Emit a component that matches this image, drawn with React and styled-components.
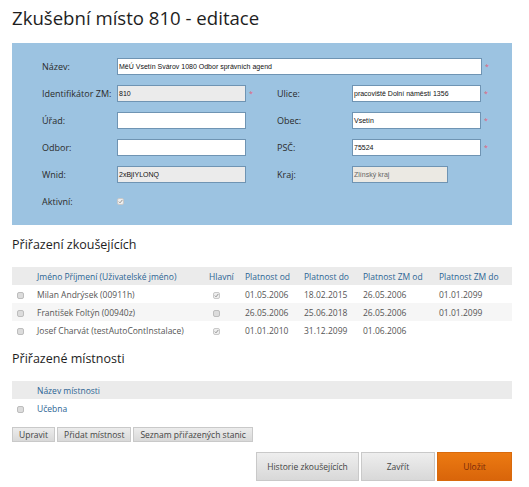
import React from 'react';
import styled, { createGlobalStyle } from 'styled-components';

const GlobalStyle = createGlobalStyle`
  body {
    margin: 0;
    background: #fff;
    font-family: "Open Sans", "DejaVu Sans", sans-serif;
    color: #333;
  }
`

const Page = styled.div`
  width: 500px;
  margin-left: 12px;
`

const Title = styled.h1`
  margin: 0;
  padding-top: 4px;
  font-size: 18.6px;
  line-height: 28px;
  font-weight: 400;
  color: #1e1e1e;
`

const Panel = styled.div`
  margin-top: 11px;
  background: #9cc3e1;
  padding: 15px 0 15px 30px;
`

const FormGrid = styled.div`
  display: grid;
  grid-template-columns: 75px 160px 75px 139px;
  row-gap: 10px;
  align-items: center;
`

const Label = styled.div`
  font-size: 9px;
  color: #2b2b2b;
  line-height: 17px;
`

const Cell = styled.div`
  display: flex;
  align-items: center;
  grid-column: ${({ span }) => span || 'auto'};
`

const Input = styled.div`
  box-sizing: border-box;
  width: ${({ w }) => w || 129}px;
  height: 17px;
  border: 1px solid #6f94b3;
  background: ${({ bg }) => bg || '#fff'};
  font-family: "Liberation Sans", Arial, sans-serif;
  font-size: 7px;
  line-height: 15px;
  padding-left: 1px;
  color: ${({ muted }) => (muted ? '#666' : '#111')};
  white-space: nowrap;
  overflow: hidden;
`

const Star = styled.span`
  margin-left: 3px;
  color: #e0607a;
  font-size: 7px;
  line-height: 7px;
`

const Box = styled.span`
  display: inline-block;
  box-sizing: border-box;
  width: 7px;
  height: 7px;
  border-radius: 2px;
  border: 1px solid ${({ checked }) => (checked ? '#c8c8c8' : '#bdbdbd')};
  background: ${({ checked }) => (checked ? '#eee' : '#dcdcdc')};
  position: relative;
  vertical-align: middle;
  svg {
    position: absolute;
    left: 0;
    top: 0;
  }
`

const Check = ({ checked }) => (
  <Box checked={checked}>
    {checked && (
      <svg width="5" height="5" viewBox="0 0 5 5">
        <path d="M0.8 2.6 L2 3.8 L4.3 1" fill="none" stroke="#888" strokeWidth="0.9" />
      </svg>
    )}
  </Box>
)

const Heading = styled.h2`
  margin: 11px 0 13px;
  font-size: 12.5px;
  line-height: 18px;
  font-weight: 400;
  color: #1e1e1e;
`

const Table = styled.table`
  width: 500px;
  border-collapse: collapse;
  table-layout: fixed;
  font-size: 8.5px;
`

const Th = styled.th`
  height: 18px;
  padding: 0;
  background: #ebebeb;
  color: #2c6594;
  font-weight: 400;
  text-align: left;
`

const Tr = styled.tr`
  background: ${({ alt }) => (alt ? '#f6f6f6' : '#fff')};
`

const Td = styled.td`
  height: 18px;
  padding: 0;
  color: ${({ link }) => (link ? '#2c6594' : '#555')};
  text-align: left;
  padding-left: ${({ pl }) => pl || 0}px;
`

const SmallButtons = styled.div`
  display: flex;
  gap: 2px;
  margin-top: 10px;
`

const SmallButton = styled.button`
  height: 15px;
  padding: 0 6px;
  border: 1px solid #c9c9c9;
  background: linear-gradient(#ececec, #d9d9d9);
  font-family: inherit;
  font-size: 8.5px;
  color: #444;
  line-height: 13px;
`

const Footer = styled.div`
  display: flex;
  justify-content: flex-end;
  gap: 2px;
  margin-top: 10px;
`

const BigButton = styled.button`
  width: ${({ w }) => w}px;
  height: 29px;
  border: 1px solid ${({ primary }) => (primary ? '#d96a0c' : '#c9c9c9')};
  background: ${({ primary }) =>
    primary ? 'linear-gradient(#ec7a12, #d9650a)' : 'linear-gradient(#eeeeee, #d8d8d8)'};
  color: ${({ primary }) => (primary ? '#7a2a0a' : '#444')};
  font-family: inherit;
  font-size: 8.5px;
`

const examiners = [
  { name: 'Milan Andrýsek (00911h)', main: true, od: '01.05.2006', do: '18.02.2015', zmOd: '26.05.2006', zmDo: '01.01.2099' },
  { name: 'František Foltýn (00940z)', main: false, od: '26.05.2006', do: '25.06.2018', zmOd: '26.05.2006', zmDo: '01.01.2099' },
  { name: 'Josef Charvát (testAutoContInstalace)', main: true, od: '01.01.2010', do: '31.12.2099', zmOd: '01.06.2006', zmDo: '' },
]

const App = () => (
  <Page>
    <GlobalStyle />
    <Title>Zkušební místo 810 - editace</Title>

    <Panel>
      <FormGrid>
        <Label>Název:</Label>
        <Cell span="2 / 5">
          <Input w={365}>MěÚ Vsetín Svárov 1080 Odbor správních agend</Input>
          <Star>*</Star>
        </Cell>

        <Label>Identifikátor ZM:</Label>
        <Cell>
          <Input bg="#ebebeb">810</Input>
          <Star>*</Star>
        </Cell>
        <Label>Ulice:</Label>
        <Cell>
          <Input>pracoviště Dolní náměstí 1356</Input>
          <Star>*</Star>
        </Cell>

        <Label>Úřad:</Label>
        <Cell>
          <Input />
        </Cell>
        <Label>Obec:</Label>
        <Cell>
          <Input>Vsetín</Input>
          <Star>*</Star>
        </Cell>

        <Label>Odbor:</Label>
        <Cell>
          <Input />
        </Cell>
        <Label>PSČ:</Label>
        <Cell>
          <Input>75524</Input>
          <Star>*</Star>
        </Cell>

        <Label>Wnid:</Label>
        <Cell>
          <Input bg="#ebebeb">2xBjIYLONQ</Input>
        </Cell>
        <Label>Kraj:</Label>
        <Cell>
          <Input w={96} bg="#ebe9e3" muted>Zlínský kraj</Input>
        </Cell>

        <Label>Aktivní:</Label>
        <Cell>
          <Check checked />
        </Cell>
      </FormGrid>
    </Panel>

    <Heading>Přiřazení zkoušejících</Heading>
    <Table>
      <colgroup>
        <col style={{ width: 25 }} />
        <col style={{ width: 172 }} />
        <col style={{ width: 36 }} />
        <col style={{ width: 59 }} />
        <col style={{ width: 59 }} />
        <col style={{ width: 76 }} />
        <col />
      </colgroup>
      <thead>
        <tr>
          <Th />
          <Th>Jméno Příjmení (Uživatelské jméno)</Th>
          <Th>Hlavní</Th>
          <Th>Platnost od</Th>
          <Th>Platnost do</Th>
          <Th>Platnost ZM od</Th>
          <Th>Platnost ZM do</Th>
        </tr>
      </thead>
      <tbody>
        {examiners.map((e, i) => (
          <Tr key={e.name} alt={i % 2 === 1}>
            <Td pl={5}><Check /></Td>
            <Td>{e.name}</Td>
            <Td pl={4}><Check checked={e.main} /></Td>
            <Td>{e.od}</Td>
            <Td>{e.do}</Td>
            <Td>{e.zmOd}</Td>
            <Td>{e.zmDo}</Td>
          </Tr>
        ))}
      </tbody>
    </Table>

    <Heading>Přiřazené místnosti</Heading>
    <Table>
      <colgroup>
        <col style={{ width: 25 }} />
        <col />
      </colgroup>
      <thead>
        <tr>
          <Th />
          <Th>Název místnosti</Th>
        </tr>
      </thead>
      <tbody>
        <Tr>
          <Td pl={5}><Check /></Td>
          <Td link>Učebna</Td>
        </Tr>
      </tbody>
    </Table>

    <SmallButtons>
      <SmallButton>Upravit</SmallButton>
      <SmallButton>Přidat místnost</SmallButton>
      <SmallButton>Seznam přiřazených stanic</SmallButton>
    </SmallButtons>

    <Footer>
      <BigButton w={103}>Historie zkoušejících</BigButton>
      <BigButton w={74}>Zavřít</BigButton>
      <BigButton w={75} primary>Uložit</BigButton>
    </Footer>
  </Page>
)

export default App
